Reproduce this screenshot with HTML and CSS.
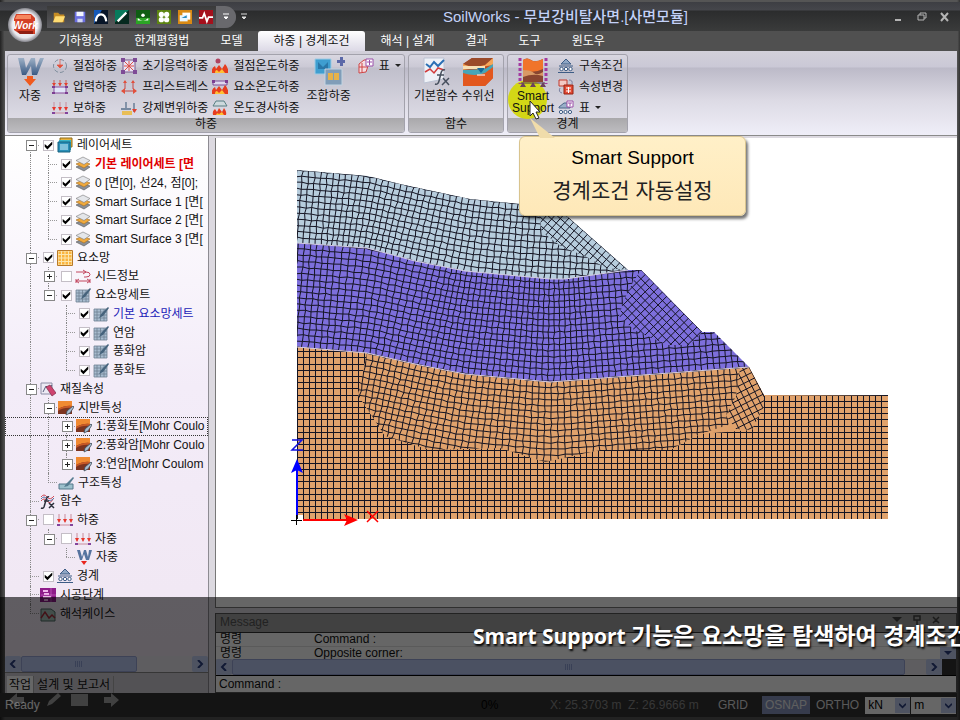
FILE: index.html
```html
<!DOCTYPE html>
<html lang="ko">
<head>
<meta charset="utf-8">
<title>SoilWorks - 무보강비탈사면.[사면모듈]</title>
<link rel="stylesheet" href="styles.css">
</head>
<body>
<svg class="defs" aria-hidden="true">
  <symbol id="layers" viewBox="0 0 16 16"><path d="M1 11l7-3 7 3-6 4z" fill="#8a8f98" stroke="#555" stroke-width=".6"/><path d="M1 8l7-3 7 3-6 4z" fill="#f0a93c" stroke="#a06a20" stroke-width=".6"/><path d="M1 4.500l7-3.500 7 3.500-6 4z" fill="#e4e6ea" stroke="#777" stroke-width=".6"/></symbol>
  <symbol id="layerset" viewBox="0 0 16 16"><path d="M3 1h12v9H3z" fill="#e9b23a" stroke="#8f6a1c"/><path d="M2 3h12v10H2z" fill="#37b3c9"/><path d="M1 5h12v10H1z" fill="#2a8fb8" stroke="#17607f"/><path d="M3 8h8M3 10h8M3 12h8" stroke="#d4f4ff"/></symbol>
  <symbol id="mesh" viewBox="0 0 16 16"><path d="M1 1h14v14H1z" fill="#fbb43c"/><path d="M1 1h14v14H1zM4.500 1v14M8 1v14M11.500 1v14M1 4.500h14M1 8h14M1 11.500h14" fill="none" stroke="#fbe6b0"/><path d="M.5.5h15v15H.5z" fill="none" stroke="#b97a28"/></symbol>
  <symbol id="seed" viewBox="0 0 16 16"><path d="M1 4h10q4 0 4 2.500T11 9H9M1 13h14M1 11v4M15 11v4M8 2l3 2-3 2M4 11l-3 2 3 2M12 11l3 2-3 2" fill="none" stroke="#c2475f"/></symbol>
  <symbol id="meshset" viewBox="0 0 16 16"><path d="M1 3h13v12H1z" fill="#a9bdd0"/><path d="M1 3h13v12H1zM4 3v12M7.500 3v12M11 3v12M1 6h13M1 9h13M1 12h13" fill="none" stroke="#6f8192" stroke-width=".8"/><path d="M15 1L8 8l-2 4 4-2 6-8z" fill="#46637c"/></symbol>
  <symbol id="material" viewBox="0 0 16 16"><path d="M1 2h11v11H1z" fill="#eceaf4" stroke="#8c8ca4"/><path d="M3 11l3-6 3 3 3-4" fill="none" stroke="#555b7a"/><path d="M6 6l4-2 6 8-4 3z" fill="#cf4470" stroke="#7d2847" stroke-width=".7"/></symbol>
  <symbol id="ground" viewBox="0 0 16 16"><path d="M0 1h14v13H0z" fill="#7c3420"/><path d="M0 1h14v5q-6-1-14 3z" fill="#f08a32"/><path d="M0 9q8-4 14-3v2q-8-1-14 3z" fill="#c95a26"/><path d="M15 6l-6 5-1 4 4-2 4-6z" fill="#a9bdd0" stroke="#3c4a58" stroke-width=".8"/></symbol>
  <symbol id="struct" viewBox="0 0 16 16"><path d="M1 9h14v5H1z" fill="#9cc0cc" stroke="#54798a"/><path d="M15 2L8 9l-2 3 4-1 6-8z" fill="#567c90"/></symbol>
  <symbol id="fx" viewBox="0 0 16 16"><path d="M1 4q3-4 6 0t7-1M1 8q3-4 6 0t6-2" fill="none" stroke="#cf4855"/><path d="M1 6q3-4 6 0t7-1" fill="none" stroke="#5877a8"/><path d="M9 4q-2-1-3 3l-2 7q-1 2-3 1M4 8h5M9 10l5 5M14 10l-5 5" fill="none" stroke="#2b2f3a" stroke-width="1.500"/></symbol>
  <symbol id="load" viewBox="0 0 16 16"><path d="M2 2v8M8 2v8M14 2v8M1 13h14" stroke="#c98c9c"/><path d="M0 7h4l-2 4zM6 7h4l-2 4zM12 7h4l-2 4z" fill="#e8372c"/><path d="M0 12h3v2H0zM13 12h3v2h-3z" fill="#83449c"/></symbol>
  <symbol id="weight" viewBox="0 0 16 16"><path d="M1 1h3l2 7 2-7h2l2 7 1-7h3l-3 10h-3L8 5l-2 6H4z" fill="#56739f"/><path d="M5 12h6l-3 4z" fill="#e9251d"/></symbol>
  <symbol id="bound" viewBox="0 0 16 16"><path d="M8 1l5 5H3z" fill="#8ea6c4" stroke="#3d5c85"/><path d="M1 8h14M0 14.500h16" stroke="#3d5c85"/><g fill="#fff" stroke="#3d5c85"><circle cx="3.500" cy="11" r="1.700"/><circle cx="8" cy="11" r="1.700"/><circle cx="12.500" cy="11" r="1.700"/></g></symbol>
  <symbol id="stage" viewBox="0 0 16 16"><path d="M0 1h16v14H0z" fill="#8f1d8a"/><path d="M3 3h5v2H3zM4 6h5v2H4zM3 9h8v2H3zM4 12h4v2H4z" fill="#f0b4ea"/><path d="M11 1v14M1 8h15" stroke="#d88bd6" stroke-width=".5"/></symbol>
  <symbol id="case" viewBox="0 0 16 16"><path d="M1 3h10l4 3v9H1z" fill="#a8c4bc" stroke="#4c6b64"/><path d="M1 12l4-6 4 6 3-3 3 3" fill="none" stroke="#a52c3b" stroke-width="1.500"/></symbol>
  <symbol id="node" viewBox="0 0 16 16"><circle cx="8" cy="8" r="6.500" fill="none" stroke="#7f8d9c" stroke-dasharray="4 2"/><path d="M8 1v6M5 7h6l-3 3z" fill="#e2503c" stroke="#e2503c" stroke-width=".7"/></symbol>
  <symbol id="press" viewBox="0 0 16 16"><path d="M2 1v6M8 1v6M14 1v6" stroke="#c85a50"/><path d="M0 4h4L2 7zM6 4h4L8 7zM12 4h4l-2 3z" fill="#e2412f"/><path d="M2 8h12v6H2z" fill="#dfe4f6" stroke="#8a4d9e"/><path d="M0 7h3v2H0zM13 7h3v2h-3zM0 13h3v2H0zM13 13h3v2h-3z" fill="#7c3e92"/></symbol>
  <symbol id="init" viewBox="0 0 16 16"><path d="M2 2h12v12H2z" fill="#e8e2f4" stroke="#7a5a8c"/><path d="M4 4l8 8M12 4l-8 8M8 3v10M3 8h10" stroke="#de5148"/><path d="M0 0h4v4H0zM12 0h4v4h-4zM0 12h4v4H0zM12 12h4v4h-4z" fill="#7e4b96"/></symbol>
  <symbol id="stress" viewBox="0 0 16 16"><path d="M4 2v8M12 2v8M1 12h14" stroke="#c04848"/><path d="M2 4l2-3 2 3zM10 4l2-3 2 3zM4 9l-4 3 4 3zM12 9l4 3-4 3z" fill="#e2503c"/></symbol>
  <symbol id="disp" viewBox="0 0 16 16"><path d="M0 9h10M5 2v6M13 3v9" stroke="#59718c" stroke-width="1.300"/><path d="M1 11h10v4H1z" fill="#e9be57"/><path d="M11 9h5l-2.500 4z" fill="#e2412f"/></symbol>
  <symbol id="fire" viewBox="0 0 16 16"><circle cx="6" cy="3" r="2.500" fill="#b04360"/><path d="M0 15q-1-5 3-7l1 3 3-4 3 4 3-5q4 4 3 9z" fill="#e63d1f"/><path d="M3 15q0-3 2-3l2 2 3-3 3 4z" fill="#ffc034"/></symbol>
  <symbol id="fire2" viewBox="0 0 16 16"><path d="M1 2h14v4H1z" fill="#ddd7ee" stroke="#7c4d98"/><path d="M0 15q-1-5 3-7l1 3 3-4 3 4 3-5q4 4 3 9z" fill="#e63d1f"/><path d="M3 15q0-3 2-3l2 2 3-3 3 4z" fill="#ffc034"/><path d="M0 1h3v3H0zM13 1h3v3h-3z" fill="#7c3e92"/></symbol>
  <symbol id="fire3" viewBox="0 0 16 16"><path d="M4 1h8l3 5H1z" fill="#cdd9dd" stroke="#587f83"/><path d="M1 15q-1-4 2-6l2 3 2-4 3 4 2-4q3 4 2 7z" fill="#e63d1f"/><path d="M4 15q1-3 3-1l3-2 2 3z" fill="#ffc034"/></symbol>
  <symbol id="loadtable" viewBox="0 0 16 16"><path d="M1 6l5-4h6l-4 12-7 1z" fill="#f4dde2" stroke="#cf4545"/><path d="M1 9h8M4 5v9" stroke="#cf4545"/><path d="M8 1h7v7H8z" fill="#fff" stroke="#9a4fa8"/><path d="M9 4h5M11.500 2v5" stroke="#9a4fa8"/></symbol>
  <symbol id="boundtable" viewBox="0 0 16 16"><path d="M1 7l5-4h6v5H1z" fill="#9ab0c9" stroke="#4b6588"/><g fill="#fff" stroke="#3d5c85"><circle cx="3" cy="12" r="1.600"/><circle cx="7.500" cy="12" r="1.600"/><circle cx="12" cy="12" r="1.600"/></g><path d="M9 1h6v6H9z" fill="#fff" stroke="#9a4fa8"/><path d="M10 3h4M12 3v3" stroke="#9a4fa8"/></symbol>
  <symbol id="change" viewBox="0 0 16 16"><path d="M1 1h8v6H1z" fill="#f3c9c4" stroke="#c23b2d"/><path d="M6 6h9v9H6z" fill="#e24a34" stroke="#972313"/><path d="M8 9h5M8 12h5M10.500 8v6" stroke="#fff"/><path d="M11 1q4 0 3 4M4 14q-4-1-2-5" fill="none" stroke="#7a7f9e"/></symbol>
  <symbol id="bigW" viewBox="0 0 28 32"><defs><linearGradient id="wg" x2="0" y2="1"><stop stop-color="#9db0c6"/><stop offset="1" stop-color="#3a5a84"/></linearGradient></defs><path d="M2 2h6l2 10 5-10h4l1 10 4-10h4l-7 17h-5l-1-9-5 9H6z" fill="url(#wg)"/><path d="M11 20h6v3h3l-6 7-6-7h3z" fill="#f05a1e"/></symbol>
  <symbol id="combine" viewBox="0 0 32 32"><path d="M2 3h16v15H2z" fill="#3f9ed0" stroke="#9ecbe4"/><path d="M5 6l5 5 5-5v7H5z" fill="#2a77a8"/><path d="M12 13h17v16H12z" fill="#809db8" stroke="#c3d4e2"/><path d="M15 17h5v7h-5zM21 17h5v7h-5z" fill="#e6b24a"/><path d="M24 4h3v-3h3v3h2v3h-2v3h-3V7h-3z" fill="#5b68a8"/></symbol>
  <symbol id="bigfx" viewBox="0 0 32 32"><path d="M4 2h20v21l-20 4z" fill="#eef1f7" stroke="#bcc3d3"/><path d="M6 8l4 3 4-5 4 4 6-6" fill="none" stroke="#2b6fb4" stroke-width="2"/><path d="M5 16l5-3 4 4 4-5 6 2" fill="none" stroke="#d23c3c" stroke-width="1.500"/><path d="M25 14q-3-1-4 3l-2 8q-1 4-4 3M17 19h7M23 22l6 7M29 22l-7 7" fill="none" stroke="#47505e" stroke-width="1.500"/></symbol>
  <symbol id="water" viewBox="0 0 32 32"><path d="M1 8L10 2h21v20l-8 8H1z" fill="#c54a1d"/><path d="M1 8L10 2h21l-8 7q-12 3-22-1z" fill="#9a4a2a"/><path d="M1 8q10 5 22 1l8-7v7L1 14z" fill="#f4a65a"/><path d="M1 14l22-1 8-5v8l-8 6H1z" fill="#46a5b8"/><path d="M1 17q12 4 22 0l8-6v11l-8 8H1z" fill="#e2571e"/><path d="M1 10h22v3H1z" fill="#f7dfb4"/><path d="M15 12h8l-4 5z" fill="#15699b"/><path d="M15 19h8" stroke="#fff"/></symbol>
  <symbol id="smart" viewBox="0 0 32 32"><path d="M6 4q4-3 8 0t12-1v23H6z" fill="#8a4630"/><path d="M6 4q4-3 8 0t12-1v10q-10 5-20 1z" fill="#f0742b"/><path d="M6 14q8 0 11 3t9-1v4q-10-3-20 1z" fill="#d99a66"/><g fill="none" stroke="#a23aa0"><path d="M3 2v26M29 2v26" stroke-dasharray="3 2" stroke-width="3"/></g><path d="M4 27h24" stroke="#4b3550"/><path d="M6 26l-3 5h6zM16 26l-3 5h6zM26 26l-3 5h6z" fill="#6c435c"/></symbol>
  <symbol id="open" viewBox="0 0 16 16"><path d="M2 3h5l2 2h5v9H2z" fill="#c58c24"/><path d="M4 7h11l-3 7H1z" fill="#ffdc72"/></symbol>
  <symbol id="save" viewBox="0 0 16 16"><path d="M2 2h12v12H2z" fill="#6b6fe0"/><path d="M4 2h8v5H4z" fill="#f2f4ff"/><path d="M5 10h6v4H5z" fill="#d2d6f4"/></symbol>
  <symbol id="chev" viewBox="0 0 8 8"><path d="M1 1h6M2 4l2 2 2-2z" fill="currentColor" stroke="currentColor"/></symbol>
</svg>

<div class="app">
  <header class="titlebar">
    <button class="logo" aria-label="SoilWorks"><svg viewBox="0 0 36 36"><defs><radialGradient id="lg"><stop stop-color="#fff"/><stop offset=".75" stop-color="#e9e9ee"/><stop offset="1" stop-color="#85858c"/></radialGradient></defs><circle cx="18" cy="18" r="17" fill="url(#lg)"/><path d="M9 7h15l4 4v16H13l-6-4V12z" fill="#d44026"/><path d="M10 8h14v4H8z" fill="#f6875f"/><path d="M10 24h16v3H13z" fill="#8f1e12"/><text x="6" y="22">Work</text></svg></button>
    <div class="quick">
      <button aria-label="열기"><svg><use href="#open"/></svg></button>
      <button aria-label="저장"><svg><use href="#save"/></svg></button>
      <button aria-label="터널"><svg viewBox="0 0 16 16"><path d="M0 0h16v16H0z" fill="#081528"/><path d="M0 16V0h9z" fill="#1458b8"/><path d="M2 13q1-8 6-8t6 8" fill="none" stroke="#fff" stroke-width="2.500"/></svg></button>
      <button aria-label="사면"><svg viewBox="0 0 16 16"><path d="M0 0h16v16H0z" fill="#06291f"/><path d="M0 0h16L0 14z" fill="#087a5c"/><path d="M3 13L13 3" stroke="#fff" stroke-width="2.500"/></svg></button>
      <button aria-label="연약지반"><svg viewBox="0 0 16 16"><path d="M0 0h16v16H0z" fill="#0f5d13"/><path d="M0 9h16v7H0z" fill="#2ba524"/><path d="M2 9q6 6 12 0v3H2z" fill="#fff"/><circle cx="8" cy="6" r="2" fill="#fff"/></svg></button>
      <button aria-label="기초"><svg viewBox="0 0 16 16"><path d="M0 0h16v16H0z" fill="#5d8511"/><g fill="#fff"><circle cx="5" cy="5" r="3"/><circle cx="11" cy="5" r="3"/><circle cx="5" cy="11" r="3"/><circle cx="11" cy="11" r="3"/></g></svg></button>
      <button aria-label="침투"><svg viewBox="0 0 16 16"><path d="M0 0h16v16H0z" fill="#d98a14"/><path d="M5 3h9v8H5z" fill="#fff"/><path d="M2 6h9v7H2z" fill="#e9f6ff"/><path d="M4 9h6V6z" fill="#2c8cc0"/></svg></button>
      <button aria-label="동해석"><svg viewBox="0 0 16 16"><path d="M0 0h16v16H0z" fill="#a5101c"/><path d="M0 9h4l2-5 3 9 2-5h5" fill="none" stroke="#fff" stroke-width="2"/></svg></button>
      <button class="more" aria-label="더 보기"><svg><use href="#chev"/></svg></button>
    </div>
    <button class="custom" aria-label="도구 모음 사용자 지정"><svg><use href="#chev"/></svg></button>
    <h1>SoilWorks - 무보강비탈사면.[사면모듈]</h1>
    <div class="winbtns">
      <button aria-label="최소화"><svg viewBox="0 0 10 10"><path d="M1 8h6" stroke-width="2"/></svg></button>
      <button aria-label="복원"><svg viewBox="0 0 10 10"><path d="M1 3h6v5H1zM3 3V1h6v5H7"/></svg></button>
      <button aria-label="닫기"><svg viewBox="0 0 10 10"><path d="M1 1l7 8M8 1L1 9" stroke-width="2"/></svg></button>
    </div>
  </header>

  <nav class="tabs">
    <button>기하형상</button><button>한계평형법</button><button>모델</button><button class="on">하중 | 경계조건</button><button>해석 | 설계</button><button>결과</button><button>도구</button><button>윈도우</button>
  </nav>

  <div class="ribbon">
    <section class="group loads">
      <div class="tools">
        <button class="big w1"><svg><use href="#bigW"/></svg>자중</button>
        <div class="col"><button><svg><use href="#node"/></svg>절점하중</button><button><svg><use href="#press"/></svg>압력하중</button><button><svg><use href="#load"/></svg>보하중</button></div>
        <div class="col"><button><svg><use href="#init"/></svg>초기응력하중</button><button><svg><use href="#stress"/></svg>프리스트레스</button><button><svg><use href="#disp"/></svg>강제변위하중</button></div>
        <div class="col"><button><svg><use href="#fire"/></svg>절점온도하중</button><button><svg><use href="#fire2"/></svg>요소온도하중</button><button><svg><use href="#fire3"/></svg>온도경사하중</button></div>
        <button class="big w4"><svg><use href="#combine"/></svg>조합하중</button>
        <div class="col"><button><svg><use href="#loadtable"/></svg>표<span class="dd"></span></button></div>
      </div>
      <h2>하중</h2>
    </section>
    <section class="group funcs">
      <div class="tools">
        <button class="big w2"><svg><use href="#bigfx"/></svg>기본함수</button>
        <button class="big w3"><svg><use href="#water"/></svg>수위선</button>
      </div>
      <h2>함수</h2>
    </section>
    <section class="group bounds">
      <div class="tools">
        <button class="big hot"><svg><use href="#smart"/></svg>Smart<br>Support</button>
        <div class="col"><button><svg><use href="#bound"/></svg>구속조건</button><button><svg><use href="#change"/></svg>속성변경</button><button><svg><use href="#boundtable"/></svg>표<span class="dd"></span></button></div>
      </div>
      <h2>경계</h2>
    </section>
  </div>

  <main class="work">
    <aside class="side">
      <ul class="tree">
        <li><i class="t first minus"></i><label><input type="checkbox" checked><svg><use href="#layerset"/></svg>레이어세트</label></li>
        <li><i class="g"></i><i class="t"></i><label class="red"><input type="checkbox" checked><svg><use href="#layers"/></svg>기본 레이어세트 [면</label></li>
        <li><i class="g"></i><i class="t"></i><label><input type="checkbox" checked><svg><use href="#layers"/></svg>0 [면[0], 선24, 점[0];</label></li>
        <li><i class="g"></i><i class="t"></i><label><input type="checkbox" checked><svg><use href="#layers"/></svg>Smart Surface 1 [면[</label></li>
        <li><i class="g"></i><i class="t"></i><label><input type="checkbox" checked><svg><use href="#layers"/></svg>Smart Surface 2 [면[</label></li>
        <li><i class="g"></i><i class="t last"></i><label><input type="checkbox" checked><svg><use href="#layers"/></svg>Smart Surface 3 [면[</label></li>
        <li><i class="t minus"></i><label><input type="checkbox" checked><svg><use href="#mesh"/></svg>요소망</label></li>
        <li><i class="g"></i><i class="t plus"></i><label><input type="checkbox"><svg><use href="#seed"/></svg>시드정보</label></li>
        <li><i class="g"></i><i class="t last minus"></i><label><input type="checkbox" checked><svg><use href="#meshset"/></svg>요소망세트</label></li>
        <li><i class="g"></i><i></i><i class="t"></i><label class="blue"><input type="checkbox" checked><svg><use href="#meshset"/></svg>기본 요소망세트</label></li>
        <li><i class="g"></i><i></i><i class="t"></i><label><input type="checkbox" checked><svg><use href="#meshset"/></svg>연암</label></li>
        <li><i class="g"></i><i></i><i class="t"></i><label><input type="checkbox" checked><svg><use href="#meshset"/></svg>풍화암</label></li>
        <li><i class="g"></i><i></i><i class="t last"></i><label><input type="checkbox" checked><svg><use href="#meshset"/></svg>풍화토</label></li>
        <li><i class="t minus"></i><span><svg><use href="#material"/></svg>재질속성</span></li>
        <li><i class="g"></i><i class="t minus"></i><span><svg><use href="#ground"/></svg>지반특성</span></li>
        <li class="focus"><i class="g"></i><i class="g"></i><i class="t plus"></i><span><svg><use href="#ground"/></svg>1:풍화토[Mohr Coulo</span></li>
        <li><i class="g"></i><i class="g"></i><i class="t plus"></i><span><svg><use href="#ground"/></svg>2:풍화암[Mohr Coulo</span></li>
        <li><i class="g"></i><i class="g"></i><i class="t last plus"></i><span><svg><use href="#ground"/></svg>3:연암[Mohr Coulom</span></li>
        <li><i class="g"></i><i class="t last"></i><span><svg><use href="#struct"/></svg>구조특성</span></li>
        <li><i class="t"></i><span><svg><use href="#fx"/></svg>함수</span></li>
        <li><i class="t minus"></i><label><input type="checkbox"><svg><use href="#load"/></svg>하중</label></li>
        <li><i class="g"></i><i class="t last minus"></i><label><input type="checkbox"><svg><use href="#load"/></svg>자중</label></li>
        <li><i class="g"></i><i></i><i class="t last"></i><span><svg><use href="#weight"/></svg>자중</span></li>
        <li><i class="t"></i><label><input type="checkbox" checked><svg><use href="#bound"/></svg>경계</label></li>
        <li><i class="t"></i><span><svg><use href="#stage"/></svg>시공단계</span></li>
        <li><i class="t last"></i><span><svg><use href="#case"/></svg>해석케이스</span></li>
      </ul>
      <div class="hscroll"><button aria-label="왼쪽"><svg viewBox="0 0 8 8"><path d="M6 0L2 4l4 4"/></svg></button><div class="track"><div class="thumb part"></div></div><button aria-label="오른쪽"><svg viewBox="0 0 8 8"><path d="M2 0l4 4-4 4"/></svg></button></div>
      <div class="sidetabs"><button class="on">작업</button><button>설계 및 보고서</button></div>
    </aside>

    <div class="content">
      <div class="view"><svg id="model" role="img" aria-label="사면 요소망"></svg></div>
      <section class="message">
        <header><h2>Message</h2><span class="panelbtns"><svg viewBox="0 0 60 12"><path d="M2 3h10l-5 5z" fill="#444"/><path d="M24 2h6v4h-6zM27 6v5M43 3l6 6M49 3l-6 6" fill="none" stroke="#444" stroke-width="1.500"/></svg></span></header>
        <div class="log"><table><tr><td>명령</td><td>Command :</td></tr><tr><td>명령</td><td>Opposite corner:</td></tr></table><button class="down" aria-label="아래로"><svg viewBox="0 0 8 8"><path d="M0 2h8L4 6z" fill="#2b3f80"/></svg></button></div>
        <div class="hscroll"><button aria-label="왼쪽"><svg viewBox="0 0 8 8"><path d="M6 0L2 4l4 4"/></svg></button><div class="track"><div class="thumb"></div></div><button aria-label="오른쪽"><svg viewBox="0 0 8 8"><path d="M2 0l4 4-4 4"/></svg></button><span class="corner"></span></div>
        <div class="cmd"><label for="cmd">Command :</label><input id="cmd" type="text"></div>
      </section>
    </div>
  </main>

  <footer class="status">
    <span class="ready">Ready</span><span class="pct">0%</span><span class="coord">X: 25.3703 m&nbsp; Z: 26.9666 m</span>
    <button>GRID</button><button class="on">OSNAP</button><button>ORTHO</button>
    <span class="sel"><select aria-label="힘 단위"><option>kN</option></select><svg viewBox="0 0 8 8"><path d="M0 2l4 4 4-4"/></svg></span><span class="sel"><select aria-label="길이 단위"><option>m</option></select><svg viewBox="0 0 8 8"><path d="M0 2l4 4 4-4"/></svg></span>
  </footer>

  <svg class="tail" viewBox="0 0 30 22"><path d="M1 1l10 20h15z" fill="#f0dcaa"/></svg>
  <div class="callout"><p>Smart Support</p><p class="ko">경계조건 자동설정</p></div>
  <svg class="cursor" viewBox="0 0 12 20"><path d="M1 1v15l3-3 3 6 3-1-3-6h4z" fill="#fff" stroke="#222"/></svg>

  <div class="caption">
    <p><span class="en">Smart Support </span>기능은 요소망을 탐색하여 경계조건</p>
    <svg class="player" viewBox="0 0 120 16"><path d="M0 8l8-7v4h7v6H8v4zM38 14l2-5 9-8 3 3-9 8zM62 2h17v12H62zM95 5h7V1l8 7-8 7v-4h-7z"/></svg>
  </div>
</div>
<script src="mesh.js"></script>
</body>
</html>
```
FILE: styles.css
```css
* { box-sizing: border-box; }
body, h1, h2, p, ul { margin: 0; padding: 0; }
body {
  background: #000;
  font: 12px/16px "Liberation Sans", "Noto Sans CJK KR", sans-serif;
  color: #111;
}
button, input, select { font: inherit; color: inherit; border: 0; padding: 0; margin: 0; background: none; }
svg { display: block; }
.defs { position: absolute; width: 0; height: 0; }

.app {
  position: relative;
  display: flex;
  flex-direction: column;
  height: 100vh;
  min-height: 600px;
  padding: 2px 3px 3px 5px;
  overflow: hidden;
  background: linear-gradient(90deg, #222 0, #555 5px, #555 calc(100% - 3px), #333 100%);
}

/* title bar */
.titlebar {
  position: relative;
  display: flex;
  align-items: center;
  height: 29px;
  margin: 0 -3px 0 -5px;
  padding-left: 7px;
  background: linear-gradient(#3d3e43 0, #45464b 8px, #2b2c2d 9px, #3a3b3b 100%);
}
.logo { width: 36px; height: 36px; margin-bottom: -16px; z-index: 2; flex: none; }
.logo text { font: italic bold 10px "Liberation Sans", sans-serif; fill: #fff; }
.quick {
  display: flex;
  align-items: center;
  gap: 5px;
  height: 22px;
  margin-left: 4px;
  padding-left: 4px;
  border-radius: 0 11px 11px 0;
  background: linear-gradient(#3a3a3a, #5b5b5e);
}
.quick svg { width: 16px; height: 14px; }
.quick .more { display: flex; align-items: center; justify-content: center; width: 20px; height: 22px; margin-left: -3px; border-radius: 0 11px 11px 0; background: #69696d; color: #fff; }
.quick .more svg, .custom svg { width: 8px; height: 8px; }
.custom { margin-left: 4px; color: #ddd; }
.titlebar h1 { margin-left: 195px; font-size: 15px; line-height: 20px; font-weight: 500; color: #c3d1f8; white-space: nowrap; }
.winbtns { display: flex; gap: 13px; margin-left: auto; padding-right: 10px; }
.winbtns svg { width: 10px; height: 10px; fill: none; stroke: #b4b4b4; }

/* tabs */
.tabs { display: flex; gap: 1px; height: 20px; padding-left: 39px; background: #505050; color: #fff; }
.tabs button { padding: 0 15px; white-space: nowrap; }
.tabs .on { color: #111; border-radius: 3px 3px 0 0; background: linear-gradient(#fff, #dcd9e6); }

/* ribbon */
.ribbon {
  display: flex;
  gap: 3px;
  height: 85px;
  padding: 3px 1px 2px 2px;
  border-bottom: 1px solid #8a8a8a;
  background: linear-gradient(#d2d0da 0, #cac8d6 16px, #bcbac8 17px, #dddbe5 50px, #efeef8 100%);
}
.group {
  display: flex;
  flex-direction: column;
  border: 1px solid #a3a2ac;
  border-radius: 3px;
  overflow: hidden;
  background: linear-gradient(#d9d7e1 0, #cbc9d5 12px, #c0bfcb 13px, #e4e2ec 100%);
}
.loads { width: 398px; }
.funcs { width: 96px; }
.bounds { width: 121px; }
.group h2 { height: 14px; font-size: 12px; line-height: 13px; font-weight: 400; text-align: center; background: linear-gradient(#a9a8ab, #bdbcc0); flex: none; }
.tools { display: flex; flex: 1; gap: 4px; padding-left: 4px; white-space: nowrap; min-height: 0; }
.col { display: grid; grid-template-rows: repeat(3, 21px); }
.col button { display: flex; align-items: center; gap: 5px; }
.col svg { width: 16px; height: 16px; }
.big { position: relative; display: flex; flex-direction: column; align-items: center; flex: none; }
.big svg { width: 32px; height: 32px; margin-top: 1px; }
.w1 { width: 36px; }
.w2 { width: 46px; }
.w3 { width: 34px; }
.w4 { width: 50px; }
.funcs .tools { gap: 2px; }
.hot { width: 42px; line-height: 12px; z-index: 0; }
.hot svg { margin-bottom: 2px; }
.hot::before { content: ""; position: absolute; z-index: -1; left: -4px; top: 25px; width: 39px; height: 39px; border-radius: 50%; background: #d3d716; }
.dd { border: 3px solid transparent; border-top-color: #222; border-bottom: 0; }

/* workspace */
.work { display: flex; flex: 1; min-height: 0; background: #dcd9e0; }
.side { display: flex; flex-direction: column; width: 204px; border-right: 1px solid #8d8b92; background: linear-gradient(#fff 0, #f3ecf8 45%, #f0e6f2 100%); }
.tree { display: grid; grid-auto-rows: 1fr; flex: 1; padding-bottom: 33px; list-style: none; overflow: hidden; }
.tree li { display: flex; align-items: stretch; min-height: 0; padding-left: 17px; white-space: nowrap; overflow: hidden; }
.tree label, .tree li > span { display: flex; align-items: center; }
.tree svg { width: 16px; height: 16px; margin-right: 4px; flex: none; }
.tree .red { color: #e00000; font-weight: 700; }
.tree .blue { color: #1a1ab8; }
.tree .focus { outline: 1px dotted #333; outline-offset: -1px; }
.tree i { position: relative; width: 18px; flex: none; }
.tree i.g::before, .tree i.t::before { content: ""; position: absolute; left: 8px; top: 0; bottom: 0; border-left: 1px dotted #888; }
.tree i.first::before { top: 50%; }
.tree i.last::before { bottom: 50%; }
.tree i.t { background: repeating-linear-gradient(90deg, #999 0 1px, transparent 1px 2px) 8px 50% / 10px 1px no-repeat; }
.tree i.minus::after, .tree i.plus::after {
  content: ""; position: absolute; left: 4px; top: calc(50% - 5px); width: 9px; height: 9px; border: 1px solid #888;
  background: linear-gradient(#222, #222) center / 5px 1px no-repeat, #fff;
}
.tree i.plus::after { background: linear-gradient(#222, #222) center / 5px 1px no-repeat, linear-gradient(#222, #222) center / 1px 5px no-repeat, #fff; }
.tree input { appearance: none; width: 11px; height: 11px; margin: 0 3px; border: 1px solid #c4bec6; background: #fff; flex: none; }
.tree input:checked::before { content: ""; display: block; width: 9px; height: 9px; background: #000; clip-path: polygon(8% 35%, 38% 60%, 92% 8%, 92% 40%, 38% 95%, 8% 65%); }

.hscroll { display: flex; height: 16px; background: #ebe8f0; flex: none; }
.hscroll button { display: grid; place-items: center; width: 16px; border-radius: 2px; background: #c3cff3; }
.hscroll svg { width: 8px; height: 8px; fill: none; stroke: #2b3f80; stroke-width: 2; }
.track { flex: 1; }
.thumb { width: 97%; height: 100%; border: 1px solid #98a6d8; border-radius: 2px; background: repeating-linear-gradient(90deg, #8fa0d8 0 1px, transparent 1px 2px) center / 8px 6px no-repeat, #bccaf4; }
.thumb.part { width: 68%; }
.corner { width: 14px; background: #333; }
.sidetabs { display: flex; height: 21px; padding: 3px 2px 0; border-top: 1px solid #888; background: #d0ced4; }
.sidetabs button { padding: 0 3px; border-right: 1px solid #aaa; white-space: nowrap; }
.sidetabs .on { background: #fff; padding: 0 2px; }

.content { display: flex; flex-direction: column; flex: 1; min-width: 0; padding: 2px 0 0 6px; }
.view { flex: 1; min-height: 0; border-left: 1px solid #777; border-bottom: 1px solid #777; background: #fff; }
.view svg { width: 100%; height: 100%; }
.message { margin-top: 5px; border: 1px solid #555; background: #fff; }
.message header { display: flex; justify-content: space-between; height: 19px; padding: 0 6px 0 4px; background: #a2a2a2; border-bottom: 1px solid #333; }
.message h2 { font-size: 12px; line-height: 17px; font-weight: 400; color: #555; }
.panelbtns svg { width: 60px; height: 12px; }
.log { display: flex; height: 26px; }
.log table { flex: 1; border-collapse: collapse; }
.log td { height: 13px; padding: 0 0 0 4px; line-height: 12px; border-bottom: 1px solid #e2e2e2; }
.log td:first-child { width: 94px; }
.down { width: 16px; height: 12px; align-self: flex-end; background: #c3cff3; }
.down svg { width: 8px; height: 8px; margin: auto; }
.cmd { display: flex; height: 17px; padding-left: 3px; border-top: 1px solid #000; background: #fff; }
.cmd input { flex: 1; min-width: 0; }

/* status bar */
.status { display: flex; align-items: center; height: 24px; margin-left: -5px; padding-left: 5px; background: #343434; color: #fff; white-space: nowrap; flex: none; }
.ready { width: 476px; }
.pct { color: #000; width: 69px; }
.coord { width: 162px; color: #888; }
.status button { height: 18px; padding: 0 6px; margin-right: 8px; color: #ddd; }
.status .on { padding: 0 3px; margin-right: 4px; background: #8795bd; color: #eee; }
.status button:nth-of-type(3) { padding: 0 2px; margin-right: 3px; }
.sel { display: flex; align-items: center; width: 45px; height: 17px; margin-left: 1px; background: #fff; color: #000; }
.sel select { flex: 1; min-width: 0; height: 17px; padding-left: 3px; appearance: none; }
.sel svg { width: 15px; height: 15px; padding: 4px; fill: none; stroke: #2b3f80; stroke-width: 2; background: #c3cff3; }

/* guide layer */
.callout {
  position: absolute; left: 519px; top: 136px; width: 227px; height: 80px; padding-top: 10px;
  border: 1px solid #d9c48e; border-radius: 6px; text-align: center;
  background: linear-gradient(#fff0c8, #fee8b8); box-shadow: 2px 3px 3px rgba(0, 0, 0, .55);
  font-size: 19px; line-height: 22px; color: #000;
}
.callout .ko { margin-top: 10px; font-size: 21px; line-height: 24px; color: #222; }
.tail { position: absolute; left: 529px; top: 117px; width: 30px; height: 22px; z-index: 1; }
.cursor { position: absolute; left: 529px; top: 100px; width: 12px; height: 20px; z-index: 2; }
.caption { position: absolute; left: 0; right: 0; bottom: 0; height: 123px; background: rgba(0, 0, 0, .6); overflow: hidden; }
.caption p { padding: 21px 0 0 473px; font: bold 23px/32px "Noto Sans CJK KR", sans-serif; color: #fff; white-space: nowrap; text-shadow: 1px 2px 2px #000; }
.caption .en { font-family: "Open Sans", sans-serif; font-size: 21px; }
.player { position: absolute; left: 9px; bottom: 12px; width: 120px; height: 16px; fill: #aaa; opacity: .3; }
```
FILE: mesh.js
```js
// Draws the slope model: three soil layers, their quad meshes and the axis marker.
const SIZE = 6.15;
const TOP = [[297,170],[368,176],[400,184],[470,199],[520,204],[553,206],[660,212]];
const B1 = [[297,243],[367,248],[415,261],[465,271],[550,279],[565,279],[628,270],[641,270],[800,262]];
const B2 = [[297,347],[367,353],[415,364],[465,374],[550,382],[749,367],[800,363]];

const at = (line, x) => {
  let i = 1;
  while (i < line.length - 1 && line[i][0] < x) i++;
  const [a, b] = [line[i - 1], line[i]];
  return a[1] + (b[1] - a[1]) * (x - a[0]) / (b[0] - a[0]);
};
const smooth = (line, x) => (at(line, x - 14) + 2 * at(line, x) + at(line, x + 14)) / 4;
const slope = (line, x) => (at(line, x + 40) - at(line, x - 40)) / 80;
const upTo = (line, x) => line.filter(p => p[0] <= x);
const pts = a => a.map(p => p.join(",")).join(" ");
const toPath = l => "M" + l.map(p => p[0].toFixed(1) + " " + p[1].toFixed(1)).join("L");
const wobble = (i, j) => Math.sin(i * 1.7 + j * 2.3) * Math.sin(i * .31 - j * .47) * .7;

// Mesh whose rows follow a layer line and whose columns stand square to it.
function layered(line, rows, step, x0, x1) {
  const dir = Math.sign(step), cols = Math.ceil((x1 - x0) / SIZE);
  const node = (i, j) => {
    const x = x0 + i * SIZE, d = j * step;
    const nx = x - slope(line, x) * d + wobble(i, j);
    return [nx, smooth(line, nx) + d + wobble(j, i) * dir];
  };
  let d = "";
  for (let j = 0; j <= rows; j++) d += toPath(Array.from({length: cols + 1}, (_, i) => node(i, j)));
  for (let i = 0; i <= cols; i++) d += toPath(Array.from({length: rows + 1}, (_, j) => node(i, j)));
  return d;
}
// Straight mesh turned by an angle about a point.
function turned(cx, cy, deg, reach) {
  const c = Math.cos(deg * Math.PI / 180), s = Math.sin(deg * Math.PI / 180);
  const p = (u, v) => [cx + u * c - v * s, cy + u * s + v * c];
  let d = "";
  for (let k = -reach; k <= reach; k++) {
    const o = k * SIZE, r = reach * SIZE;
    d += toPath([p(o, -r), p(o, r)]) + toPath([p(-r, o), p(r, o)]);
  }
  return d;
}

const light = [...upTo(TOP, 553), [569,218], [628,270], ...upTo(B1, 628).reverse()];
const violet = [...upTo(B1, 641), [702,332], [714,332], [749,367], ...upTo(B2, 749).reverse()];
const orange = [...upTo(B2, 749), [764,395], [888,395], [888,519], [297,519]];

// Each patch: outline, fill, mesh path, and whether its lines run along the pixel rows.
const patches = [
  [light, "#b7cddd", layered(TOP, 16, SIZE, 272, 660)],
  [[[538,205],[553,206],[569,218],[628,270],[606,268],[585,256],[562,247],[542,232]], "#b7cddd", turned(569, 218, 41.5, 16)],
  [violet, "#7d6fdc", layered(B2, 20, -SIZE, 265, 770)],
  [[[641,270],[702,332],[690,345],[668,345],[652,338],[634,330],[619,316],[624,300],[633,282]], "#7d6fdc", turned(641, 270, 45.5, 18)],
  [orange, "#e0a26c", ""],
  [[[297,347],[367,353],[358,395],[385,436],[430,450],[500,448],[545,462],[600,450],[670,450],[700,434],[752,430],[764,396],[888,395],[888,519],[297,519]], "#e0a26c", (() => {
    let d = "";
    for (let x = 297; x < 889; x += 591 / 96) d += `M${x.toFixed(1)} 330V519`;
    for (let y = 519; y > 345; y -= 6.2) d += `M297 ${y.toFixed(1)}H888`;
    return d;
  })(), true],
  [[[367,353],[415,364],[465,374],[550,382],[749,367],[740,400],[728,425],[700,434],[670,450],[600,450],[545,462],[500,448],[430,450],[385,436],[358,395]], "#e0a26c", layered(B2, 16, SIZE, 330, 790)],
  [[[749,367],[764,395],[764,406],[752,430],[736,429],[726,416],[736,396],[740,368]], "#e0a26c", turned(749, 367, -27, 14)]
];

let out = "<defs>", body = "";
patches.forEach(([poly, fill, d, straight], n) => {
  out += `<clipPath id="patch${n}"><polygon points="${pts(poly)}"/></clipPath>`;
  body += `<polygon points="${pts(poly)}" fill="${fill}"/>`;
  body += `<path d="${d}" clip-path="url(#patch${n})" fill="none" stroke="#141422" stroke-width="1"${straight ? ' shape-rendering="crispEdges"' : ""}/>`;
});
const edge = (line, end) => `<polyline points="${pts(upTo(line, end))}" fill="none" stroke="#d3cbe2" stroke-width="1"/>`;
out += `</defs><g transform="translate(-216 -138)">${body}${edge(B1, 628)}${edge(B2, 749)}
<rect x="298" y="515" width="5" height="4" fill="#fff"/>
<path d="M291 520.500h11M296.500 515v10" stroke="#000"/>
<path d="M297 515V470" stroke="#00f" stroke-width="2"/><path d="M297 459l6 14-6-3-6 3z" fill="#00f"/>
<path d="M303 520h44" stroke="#f00" stroke-width="2"/><path d="M358 520l-14 6 3-6-3-6z" fill="#f00"/>
<path d="M292 440h10l-10 10h11" fill="none" stroke="#1212e0" stroke-width="1.500"/>
<path d="M367 511l11 11M378 511l-11 11" stroke="#f00" stroke-width="1.500"/></g>`;
document.getElementById("model").innerHTML = out;
```
